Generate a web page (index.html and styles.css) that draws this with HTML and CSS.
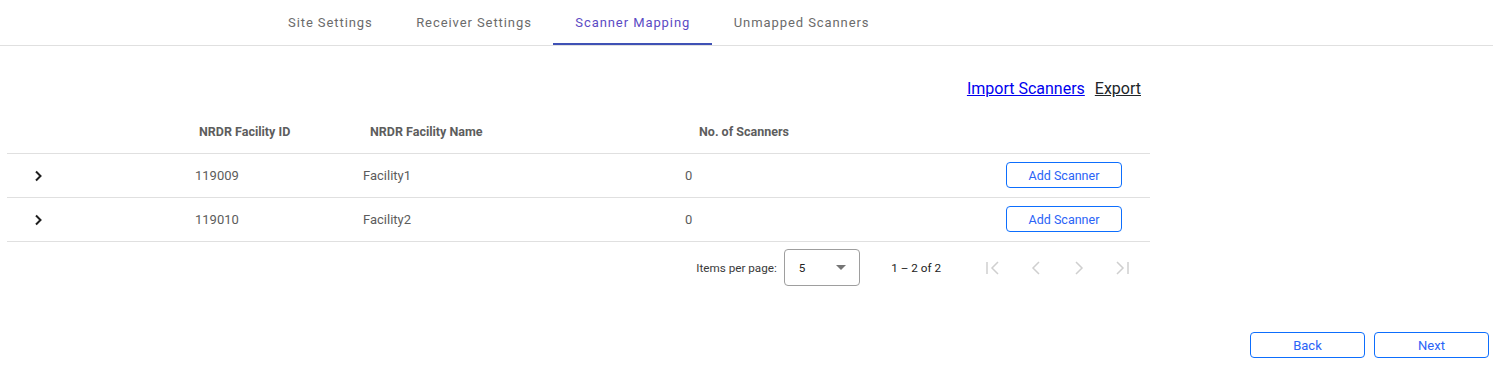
FILE: index.html
```html
<!DOCTYPE html>
<html lang="en">
<head>
<meta charset="utf-8">
<title>Scanner Mapping</title>
<link rel="stylesheet" href="styles.css">
</head>
<body>
<nav class="tabs">
  <a class="tab">Site Settings</a>
  <a class="tab">Receiver Settings</a>
  <a class="tab active">Scanner Mapping</a>
  <a class="tab">Unmapped Scanners</a>
</nav>

<main class="content">
  <div class="toolbar">
    <a class="link-import" href="#">Import Scanners</a>
    <a class="link-export" href="#">Export</a>
  </div>

  <div class="table">
    <div class="row head">
      <div class="cell c-exp"></div>
      <div class="cell c-id">NRDR Facility ID</div>
      <div class="cell c-name">NRDR Facility Name</div>
      <div class="cell c-num">No. of Scanners</div>
      <div class="cell c-act"></div>
    </div>
    <div class="row">
      <div class="cell c-exp"><svg class="chev" width="10" height="12" viewBox="0 0 10 12"><polyline points="3,1.5 7.5,6 3,10.5" fill="none" stroke="#1f1f1f" stroke-width="2"/></svg></div>
      <div class="cell c-id">119009</div>
      <div class="cell c-name">Facility1</div>
      <div class="cell c-num">0</div>
      <div class="cell c-act"><button class="btn btn-add">Add Scanner</button></div>
    </div>
    <div class="row">
      <div class="cell c-exp"><svg class="chev" width="10" height="12" viewBox="0 0 10 12"><polyline points="3,1.5 7.5,6 3,10.5" fill="none" stroke="#1f1f1f" stroke-width="2"/></svg></div>
      <div class="cell c-id">119010</div>
      <div class="cell c-name">Facility2</div>
      <div class="cell c-num">0</div>
      <div class="cell c-act"><button class="btn btn-add">Add Scanner</button></div>
    </div>
  </div>

  <div class="paginator">
    <span class="pg-label">Items per page:</span>
    <div class="pg-select">
      <span>5</span>
      <svg width="10" height="5" viewBox="0 0 10 5"><polygon points="0,0 10,0 5,5" fill="#757575"/></svg>
    </div>
    <span class="pg-range">1 – 2 of 2</span>
    <div class="pg-nav">
      <span class="pg-btn"><svg width="16" height="14" viewBox="0 0 16 14"><line x1="2" y1="1" x2="2" y2="13" stroke="#cfcfcf" stroke-width="1.5"/><polyline points="13,1 7,7 13,13" fill="none" stroke="#cfcfcf" stroke-width="1.5"/></svg></span>
      <span class="pg-btn"><svg width="12" height="14" viewBox="0 0 12 14"><polyline points="9,1 3,7 9,13" fill="none" stroke="#cfcfcf" stroke-width="1.5"/></svg></span>
      <span class="pg-btn"><svg width="12" height="14" viewBox="0 0 12 14"><polyline points="3,1 9,7 3,13" fill="none" stroke="#cfcfcf" stroke-width="1.5"/></svg></span>
      <span class="pg-btn"><svg width="16" height="14" viewBox="0 0 16 14"><polyline points="3,1 9,7 3,13" fill="none" stroke="#cfcfcf" stroke-width="1.5"/><line x1="14" y1="1" x2="14" y2="13" stroke="#cfcfcf" stroke-width="1.5"/></svg></span>
    </div>
  </div>
</main>

<footer class="footer">
  <button class="btn btn-nav">Back</button>
  <button class="btn btn-nav">Next</button>
</footer>
</body>
</html>
```

FILE: styles.css
```css
* { box-sizing: border-box; }
body {
  margin: 0;
  background: #fff;
  font-family: Roboto, "Liberation Sans", Arial, sans-serif;
  color: #5a5a5a;
}

.tabs {
  display: flex;
  height: 46px;
  padding-left: 266px;
  border-bottom: 1px solid #e0e0e0;
}
.tab {
  display: flex;
  align-items: center;
  height: 45px;
  padding: 0 21.5px 0 22px;
  font-size: 13px;
  letter-spacing: 0.92px;
  color: #6b6b6b;
  cursor: pointer;
}
.tab.active {
  color: #5b4bc4;
  box-shadow: inset 0 -2px 0 #3f51b5;
}

.content {
  margin-left: 7px;
  width: 1143px;
}

.toolbar {
  display: flex;
  justify-content: flex-end;
  gap: 10px;
  margin-top: 33px;
  padding-right: 9px;
  line-height: 20px;
  font-size: 16px;
}
.link-import { color: #0000ee; text-decoration: underline; }
.link-export { color: #212529; text-decoration: underline; }

.table { margin-top: 11px; }
.row {
  display: grid;
  grid-template-columns: 188px 168px 322px 1fr 160px;
  align-items: center;
  height: 44px;
  border-bottom: 1px solid #e0e0e0;
  font-size: 13px;
  color: #5c5c5c;
}
.row.head {
  font-size: 12.5px;
  font-weight: 700;
  color: #5d5d5d;
}
.row.head .c-id { padding-left: 4px; }
.row.head .c-name { padding-left: 7px; }
.row.head .c-num { padding-left: 14px; }
.c-exp { padding-left: 26px; display: flex; align-items: center; }
.c-act { display: flex; justify-content: flex-end; padding-right: 28px; padding-bottom: 1px; }

.btn {
  font-family: Roboto, "Liberation Sans", Arial, sans-serif;
  background: #fff;
  border: 1px solid #0d6efd;
  border-radius: 4px;
  color: #2a63f6;
  cursor: pointer;
  padding: 0;
}
.btn-add {
  width: 116px;
  height: 26px;
  font-size: 12.5px;
}

.paginator {
  display: flex;
  justify-content: flex-end;
  align-items: center;
  height: 51px;
  padding-right: 7px;
  font-size: 11.7px;
  color: #333;
}
.pg-label { margin-right: 7px; color: #3a3a3a; }
.pg-select {
  display: flex;
  align-items: center;
  justify-content: space-between;
  width: 76px;
  height: 37px;
  padding: 0 13px 0 14px;
  border: 1px solid #9e9e9e;
  border-radius: 4px;
  color: #222;
}
.pg-range { margin: 0 30px 0 31.5px; color: #222; }
.pg-nav { display: flex; }
.pg-btn {
  display: flex;
  align-items: center;
  justify-content: center;
  width: 43px;
  height: 40px;
}

.footer {
  display: flex;
  justify-content: flex-end;
  gap: 9px;
  margin-top: 39px;
  padding-right: 4px;
}
.btn-nav {
  width: 115px;
  height: 26px;
  font-size: 13px;
}
```
